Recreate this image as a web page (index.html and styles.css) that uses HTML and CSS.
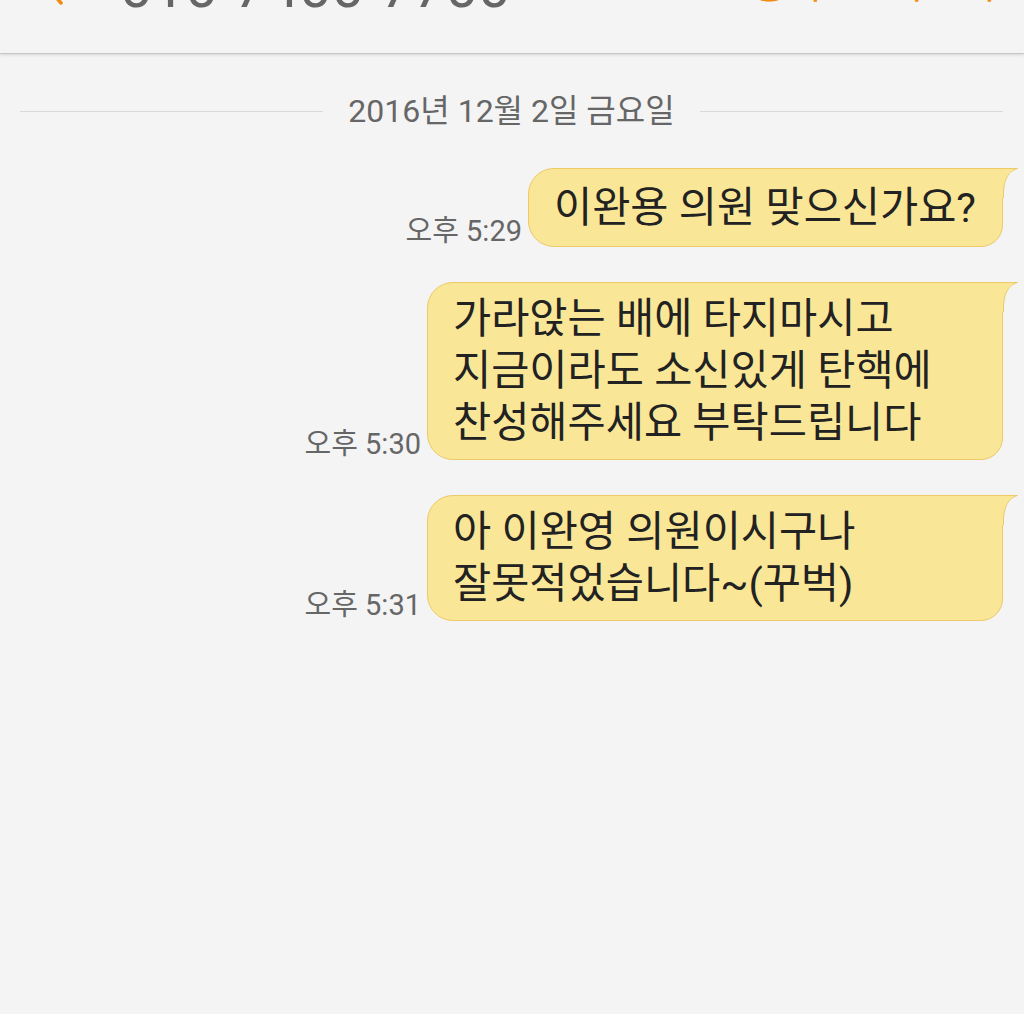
FILE: index.html
```html
<!doctype html>
<html lang="ko">
    <head>
        <meta charset="utf-8">
        <title>메시지</title>
        <link rel="stylesheet" href="styles.css">
    </head>
    <body>
        <div class="app">
            <div class="top-bar">
                <div class="top-row">
                    <svg class="back" width="24" height="46" viewBox="0 0 24 46">
                        <polyline points="21,2 4,22 21,42" fill="none" stroke="#f28c0f" stroke-width="3.5" stroke-linecap="round" stroke-linejoin="round"/>
                    </svg>
                    <span class="number">010-7400-7700</span>
                    <div class="actions">
                        <span>통화</span>
                        <span>더보기</span>
                    </div>
                </div>
            </div>

            <div class="thread">
                <div class="date-line">
                    <i></i>
                    <span>2016년 12월 2일 금요일</span>
                    <i></i>
                </div>

                <div class="msg">
                    <span class="time">오후 5:29</span>
                    <div class="bubble">
                        이완용 의원 맞으신가요?
                        <svg class="tail" width="16" height="30" viewBox="0 0 16 30"><path d="M0 0H15.8C9 2 2.5 7 1.5 24V30H0Z" fill="#f9e797"/><path d="M0 0.5H15.5C9 2.5 2.5 7.5 1.5 24V30" fill="none" stroke="#edc967" stroke-width="1"/></svg>
                    </div>
                </div>

                <div class="msg">
                    <span class="time">오후 5:30</span>
                    <div class="bubble bubble-wide">
                        가라앉는 배에 타지마시고<br>지금이라도 소신있게 탄핵에<br>찬성해주세요 부탁드립니다
                        <svg class="tail" width="16" height="30" viewBox="0 0 16 30"><path d="M0 0H15.8C9 2 2.5 7 1.5 24V30H0Z" fill="#f9e797"/><path d="M0 0.5H15.5C9 2.5 2.5 7.5 1.5 24V30" fill="none" stroke="#edc967" stroke-width="1"/></svg>
                    </div>
                </div>

                <div class="msg">
                    <span class="time">오후 5:31</span>
                    <div class="bubble bubble-wide">
                        아 이완영 의원이시구나<br>잘못적었습니다~(꾸벅)
                        <svg class="tail" width="16" height="30" viewBox="0 0 16 30"><path d="M0 0H15.8C9 2 2.5 7 1.5 24V30H0Z" fill="#f9e797"/><path d="M0 0.5H15.5C9 2.5 2.5 7.5 1.5 24V30" fill="none" stroke="#edc967" stroke-width="1"/></svg>
                    </div>
                </div>
            </div>
        </div>
    </body>
</html>
```
FILE: styles.css
```css
html,body,div,span,p {
    margin:0;
    padding:0;
}
html,body {
    width:100%;
    height:100%;
}
body {
    background:#f4f4f4;
    font-family:Roboto,'Noto Sans CJK KR',sans-serif;
    color:#222;
}
.app {
    width:100%;
    min-height:100%;
}

/* header, mostly scrolled out of view */
.top-bar {
    display:flow-root;
    height:53px;
    background:#f4f4f4;
    border-bottom:1px solid #c6c6c6;
    box-shadow:0 1px 3px rgba(0,0,0,0.12);
}
.top-row {
    display:flex;
    align-items:flex-start;
    height:58px;
    margin-top:-42px;
    padding:0 28px 0 40px;
}
.back {
    flex:none;
    margin-top:3px;
}
.number {
    margin-left:56px;
    font-size:58px;
    line-height:58px;
    color:#666;
}
.actions {
    margin-left:auto;
    margin-top:7px;
    display:flex;
    gap:63px;
    font-size:39.5px;
    line-height:40px;
    color:#f28c0f;
}

/* thread */
.thread {
    padding:0 21px 40px 20px;
}
.date-line {
    display:flex;
    align-items:center;
    gap:25px;
    margin-top:39px;
    margin-bottom:39px;
}
.date-line i {
    flex:1;
    height:1px;
    background:#d9d9d9;
}
.date-line span {
    font-size:32px;
    line-height:36px;
    color:#666;
}
.msg {
    display:flex;
    justify-content:flex-end;
    align-items:flex-end;
    gap:6px;
    margin-bottom:35px;
}
.time {
    font-size:29px;
    line-height:32px;
    color:#666;
    white-space:nowrap;
}
.bubble {
    position:relative;
    box-sizing:border-box;
    display:flex;
    align-items:center;
    min-height:79px;
    padding:10px 26px 10px 25px;
    background:#f9e797;
    border:1px solid #edc967;
    border-radius:26px 0 22px 26px;
    font-size:41.5px;
    line-height:52px;
    color:#222;
}
.bubble-wide {
    width:576px;
}
.tail {
    position:absolute;
    top:-1px;
    right:-16px;
}
```
